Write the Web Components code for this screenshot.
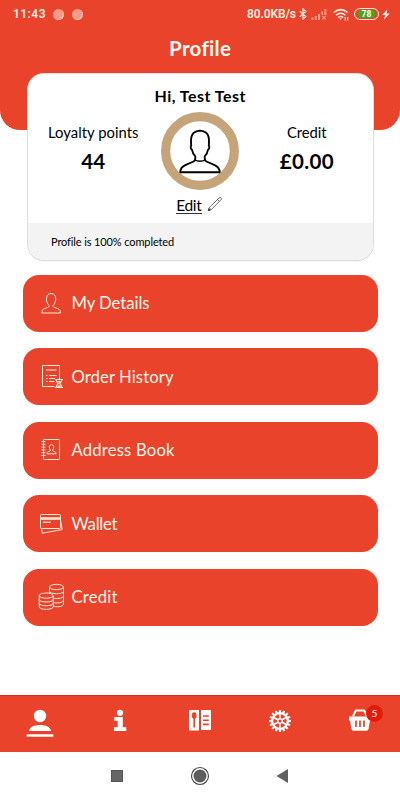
<!DOCTYPE html>
<html lang="en">
<head>
<meta charset="utf-8">
<title>Profile</title>
<style>
html,body{margin:0;height:100%;background:#fff}
body{font-family:Lato,"Liberation Sans",sans-serif;overflow:hidden}
</style>
</head>
<body>
<profile-screen></profile-screen>
<script>
const define=(name,markup,after)=>customElements.define(name,class extends HTMLElement{
  constructor(){
    super();
    const t=document.createElement('template');
    t.innerHTML=markup;
    this.attachShadow({mode:'open'}).append(t.content.cloneNode(true));
  }
  connectedCallback(){ if(after) after.call(this); }
});

/* Text whose tracking is spread so that it fills the given width. */
define('fit-text',`<style>:host{display:block;white-space:nowrap;line-height:1.2}span{display:inline-block}</style><span><slot></slot></span>`,function(){
  const s=this.shadowRoot.querySelector('span'), w=+this.getAttribute('w'), n=this.textContent.length;
  const ls=(w-s.getBoundingClientRect().width)/(n-1);
  s.style.letterSpacing=ls+'px';
  s.style.marginRight=-ls+'px';
});

define('status-bar',`<style>
:host{display:flex;align-items:center;height:28px;padding:0 10px 0 13px;color:#ffe9df;font:600 12px/14px Roboto,sans-serif;box-sizing:border-box}
i{width:11px;height:11px;border-radius:50%;background:#f79a8a;margin-left:7px;box-shadow:inset -1px -1px 0 #fbb9ab}
i+i{margin-left:8px}
b{flex:1}
svg{display:block;flex:none}
.bat{box-sizing:border-box;width:25px;height:12px;border:1px solid #ffe9df;border-radius:6px;padding:1px 3px;margin-left:5px;display:flex}
.bat span{flex:1;background:#4fa31c;border-radius:3px;font:700 8.500px/8px Roboto,sans-serif;text-align:center;color:#fff}
</style>
<fit-text w="32.5">11:43</fit-text><i></i><i></i><b></b><fit-text w="49">80.0KB/s</fit-text>
<svg width="8" height="12" viewBox="0 0 8 12" style="margin-left:3px" fill="none" stroke="#ffe9df" stroke-width="1.200"><path d="M.8 3.2 6.8 8.600 4 11.200V.8l2.800 2.600L.8 8.800"/></svg>
<svg width="16" height="12" viewBox="0 0 16 12" style="margin-left:4px" fill="#f59a89"><path d="M.5 9.500h2V12h-2zM3.800 8h2v4h-2zM7 6h2v6H7zM10.200 3.500h2V7h-2zM13.400 1h2v6h-2z"/><path d="m11.200 8 3.600 3.600m0-3.600-3.600 3.600" stroke="#f59a89" stroke-width="1.200"/></svg>
<svg width="16" height="13" viewBox="0 0 16 13" style="margin-left:6px" fill="none" stroke="#ffe9df" stroke-width="1.500"><path d="M.7 4.500q7-5.800 14 0M3 7.100q4.800-3.800 9.400 0M5.200 9.500q2.500-2 5 0"/><path d="m6.300 10.300 1.400 1.600 1.300-1.600z" fill="#ffe9df" stroke="none"/><path d="M12.300 9v3.600M14.700 9v3.600" stroke-width="1.200"/></svg>
<div class="bat"><span>78</span></div>
<svg width="8" height="11" viewBox="0 0 8 11" style="margin-left:3px" fill="#ffe9df"><path d="M5.400.2.3 6h3L1.800 10.800 7.700 4.600H4.600z"/></svg>`);

define('profile-header',`<style>
:host{display:block;height:130px;background:#ea432c;border-radius:0 0 20px 20px;color:#fff9f0}
.t{display:flex;justify-content:center;font-size:20.500px;font-weight:700;padding-top:8px}
</style><status-bar></status-bar><div class="t"><fit-text w="61.500">Profile</fit-text></div>`);

define('profile-avatar',`<style>:host{display:block;height:78px}svg{display:block}</style>
<svg width="78" height="78" viewBox="0 0 78 78"><circle cx="39" cy="39" r="34.400" fill="#fff" stroke="#c5a47a" stroke-width="9.200"/>
<path d="M19.300 60.300h39.400c0-3.600-1.700-5.600-5-7.100L45.500 49.500c-1.400-.7-1.800-1.600-1.800-3.200v-2c1.700-1.700 2.900-3.900 3.200-6.300 1.600-1.200 1.800-3.400.9-4.200.9-9.500-.6-14.600-8.800-15.200-8.200.6-9.700 5.700-8.800 15.200-.9.800-.7 3 .9 4.200.3 2.400 1.500 4.600 3.200 6.300v2c0 1.600-.4 2.500-1.800 3.200l-8.200 3.700c-3.300 1.500-5 3.500-5 7.100z" fill="none" stroke="#000" stroke-width="1.900" stroke-linejoin="round"/><path d="M33.500 47.800q5.500 2.800 11 0" fill="none" stroke="#000" stroke-width="1.400"/></svg>`);

define('profile-stat',`<style>
:host{display:flex;flex-direction:column;align-items:center;padding-top:12px;font-size:14.800px}
::slotted([slot=value]){font-size:20.500px;font-weight:700;margin-top:7px}
</style><slot></slot><slot name="value"></slot>`);

define('profile-card',`<style>
:host{display:flex;flex-direction:column;box-sizing:border-box;width:345px;height:186px;margin:-56px 0 0 27.500px;border-radius:16px;background:#fff;position:relative;overflow:hidden;box-shadow:0 0 0 1px #ddd,0 1px 2px #0002;color:#000}
.name{display:flex;justify-content:center;flex:none;box-sizing:border-box;padding-top:12px;font-size:16px;font-weight:700;height:38px}
.mid{display:grid;grid-template-columns:131.500px 82px 131.500px;justify-items:center}
.edit{display:flex;flex:none;justify-content:center;align-items:flex-start;gap:5px;height:33px;padding-top:6px;box-sizing:border-box;font-size:15.500px}
.edit fit-text{border-bottom:1px solid #333;line-height:18px;height:17px;margin-left:-1px}
.foot{flex:1;background:#f3f3f3;padding:11.500px 23.500px;font-size:11px}
svg{display:block;margin-top:0}
</style>
<div class="name"><fit-text w="91">Hi, Test Test</fit-text></div>
<div class="mid"><profile-stat><fit-text w="90.5">Loyalty points</fit-text><fit-text slot="value" w="24">44</fit-text></profile-stat>
<profile-avatar></profile-avatar>
<profile-stat><fit-text w="39.500">Credit</fit-text><fit-text slot="value" w="54">£0.00</fit-text></profile-stat></div>
<div class="edit"><fit-text w="25.500">Edit</fit-text><svg width="16" height="16" viewBox="0 0 16 16" fill="none" stroke="#333" stroke-width=".7"><path d="m1.300 14.700.8-3L12 2q1.100-1.100 2-.2t0 2L4.200 13.700zM10.500 3.500l1.900 1.900M2.100 11.700l2.100 2"/><path d="m1.300 14.700.5-1.800 1.300 1.200z" fill="#222"/></svg></div>
<div class="foot"><fit-text w="123">Profile is 100% completed</fit-text></div>`);

const menuIcons={
 person:'<path d="M3.700 23h18.800c0-3-1.500-4.200-4.500-5-2-.6-3-.9-3-2.500 1.900-1.700 2.700-3.600 2.700-6.500 0-3.300-1.400-5.500-4.600-5.500S8.500 5.700 8.500 9c0 2.900.8 4.800 2.700 6.500 0 1.600-1 1.900-3 2.500-3 .8-4.500 2-4.500 5z"/>',
 history:'<path d="M16.500 23.500H4.500V2.500h17v13.500M8 7h10.500M8 12.500h1.500m1.500 0h7.500M8 15.500h1.500m1.500 0h6M8 18.500h1.500m1.500 0h5.500"/><path d="M17 16.500h8m-8 8h8M18.200 16.500c0 2 1.500 3 2 4-.5 1-2 2-2 4m5.600-8c0 2-1.500 3-2 4 .5 1 2 2 2 4" stroke-width="1.200"/><path d="m19 24 2-2 2 2zM19.500 18h3L21 20z" fill="#ffe7d8" stroke="none"/>',
 book:'<rect x="5.500" y="3.500" width="16" height="20" rx=".8"/><path d="M3.500 5.500h4m-4 2.800h4m-4 2.800h4m-4 2.800h4m-4 2.800h4m-4 2.800h4M9 17.800h9c0-1.500-.8-2-2-2.400-1-.3-1.500-.4-1.500-1.400.9-.8 1.200-1.700 1.200-2.800 0-1.500-.7-2.500-2.200-2.500s-2.200 1-2.200 2.500c0 1.100.4 2 1.200 2.800 0 1-.5 1.100-1.500 1.400-1.200.4-2 .9-2 2.400z"/>',
 card:'<rect x="2.500" y="4.500" width="20" height="14" rx="1"/><path d="M5 12.200h8" stroke-width="1.200"/><path d="M2.500 8.500h20" stroke-width="2.600"/><path d="m3.500 18.500.8 4.700 19.800-3.600-1.600-9.600"/>',
 coins:'<ellipse cx="18.500" cy="4" rx="7" ry="2.600"/><path d="M11.500 4v6.500m14-6.500v17c0 3-8 3.500-10.300 1.700M25.500 8.300c0 3.200-14 3.200-14 0M25.500 12.700c0 3-8 3.400-10.300 2.200M25.500 17.100c0 3-8 3.400-10.300 2.200"/><ellipse cx="8.200" cy="12.600" rx="7" ry="2.600"/><path d="M1.200 12.600v11.200c0 3.400 14 3.400 14 0V12.600M1.200 16.400c0 3.400 14 3.400 14 0M1.200 20.200c0 3.400 14 3.400 14 0"/>'};
define('menu-item',`<style>
:host{display:flex;align-items:center;box-sizing:border-box;height:57px;border-radius:16px;padding-left:15px;background:#ea432c;color:#fff3e8;font-size:16.700px}
svg{width:27px;height:28px;margin-right:7px;fill:none;stroke:#ffe7d8;stroke-width:1}
</style><svg viewBox="0 0 27 28"></svg><slot></slot>`,function(){
  this.shadowRoot.querySelector('svg').innerHTML=menuIcons[this.getAttribute('icon')];
});

define('tab-bar',`<style>
:host{display:grid;grid-template-columns:repeat(5,80px);height:57px;background:#ea432c;box-sizing:border-box;border-top:1px solid #d82e1a;color:#fff}
div{display:flex;justify-content:center;position:relative}
svg{display:block;margin-top:9px;height:34px}
.badge{position:absolute;left:46px;top:9px;width:17px;height:17px;border-radius:50%;background:#e51b09;font-size:10px;line-height:16px;text-align:center}
</style>
<div><svg width="30" viewBox="0 0 30 34" fill="#fff"><circle cx="15" cy="11" r="6.200"/><path d="M4 26c.8-4 5-6 11-6s10.300 2 11 6zM1.700 29.300h26.600v2.400H1.700z"/></svg></div>
<div><svg width="16" viewBox="0 0 16 34" fill="#fff"><circle cx="8" cy="7.800" r="3.100"/><path d="M2.300 12h8.500v10.300h3.500V26H2v-3.700h3.700v-6.600H2.300z"/></svg></div>
<div><svg width="24" viewBox="0 0 24 34"><path d="M2 5h9v20.500H2a1 1 0 0 1-1-1V6a1 1 0 0 1 1-1zM13 5h9a1 1 0 0 1 1 1v18a1 1 0 0 1-1 1h-9z" fill="#fff"/><ellipse cx="6.200" cy="10.500" rx="2.400" ry="3.300" fill="#ea432c"/><path d="M6.200 12v10.500M15 11h5.800M15 15.200h5.800M15 19.400h5.800" stroke="#ea432c" stroke-width="1.600"/></svg></div>
<div><svg class="gear" width="24" viewBox="0 0 24 34"></svg></div>
<div><svg width="24" viewBox="0 0 24 34"><path d="M5 11.500 7.500 6q.3-.5 1-.5h7q.7 0 1 .5l2.500 5.500" fill="none" stroke="#fff" stroke-width="2"/><path d="M1 11.500h22v4h-1L20.500 24q-.3 1.800-2 1.800h-13q-1.700 0-2-1.800L2 15.500H1z" fill="#fff"/><path d="M8 15.500v6.500M12 15.500v6.500M16 15.500v6.500" stroke="#ea432c" stroke-width="1.700"/></svg><span class="badge">5</span></div>`,function(){
  let s='<circle cx="12" cy="16" r="7.800" fill="none" stroke="#fff" stroke-width="2.200"/><circle cx="12" cy="16" r="2.300" fill="none" stroke="#fff" stroke-width="1.400"/>';
  for(let i=0;i<16;i++) s+=`<path d="M10.700 7.800 11.100 5h1.800l.4 2.800z" fill="#fff" transform="rotate(${i*22.500} 12 16)"/>`;
  for(let i=0;i<6;i++) s+=`<path d="M12 13.500V8.500" stroke="#fff" stroke-width="1.500" transform="rotate(${i*60} 12 16)"/>`;
  this.shadowRoot.querySelector('.gear').innerHTML=s;
});

define('system-nav',`<style>
:host{display:grid;grid-template-columns:75.500px 83px 83px 80px;justify-items:center;align-items:center;height:48px;background:#fff}
svg{display:block;grid-column:2}svg+svg{grid-column:auto}
</style>
<svg width="12" height="12"><path d="M0 0h12v12H0z" fill="#666"/><path d="M.5.5h11v11H.5z" fill="none" stroke="#555"/></svg>
<svg width="20" height="20"><circle cx="10" cy="10" r="8.500" fill="none" stroke="#444" stroke-width="1.100"/><circle cx="10" cy="10" r="6.500" fill="#5e5e5e"/></svg>
<svg width="12" height="14"><path d="M12 0v14L.5 7z" fill="#606060"/></svg>`);

define('profile-screen',`<style>
:host{display:flex;flex-direction:column;width:400px;height:800px;background:#fff;overflow:hidden}
nav{display:flex;flex-direction:column;gap:16.400px;padding:15px 22.500px 0 22.500px;flex:1}
</style>
<profile-header></profile-header><profile-card></profile-card>
<nav>
<menu-item icon="person"><fit-text w="78">My Details</fit-text></menu-item>
<menu-item icon="history"><fit-text w="102">Order History</fit-text></menu-item>
<menu-item icon="book"><fit-text w="103">Address Book</fit-text></menu-item>
<menu-item icon="card"><fit-text w="46">Wallet</fit-text></menu-item>
<menu-item icon="coins"><fit-text w="46">Credit</fit-text></menu-item>
</nav>
<tab-bar></tab-bar><system-nav></system-nav>`);
</script>
</body>
</html>
